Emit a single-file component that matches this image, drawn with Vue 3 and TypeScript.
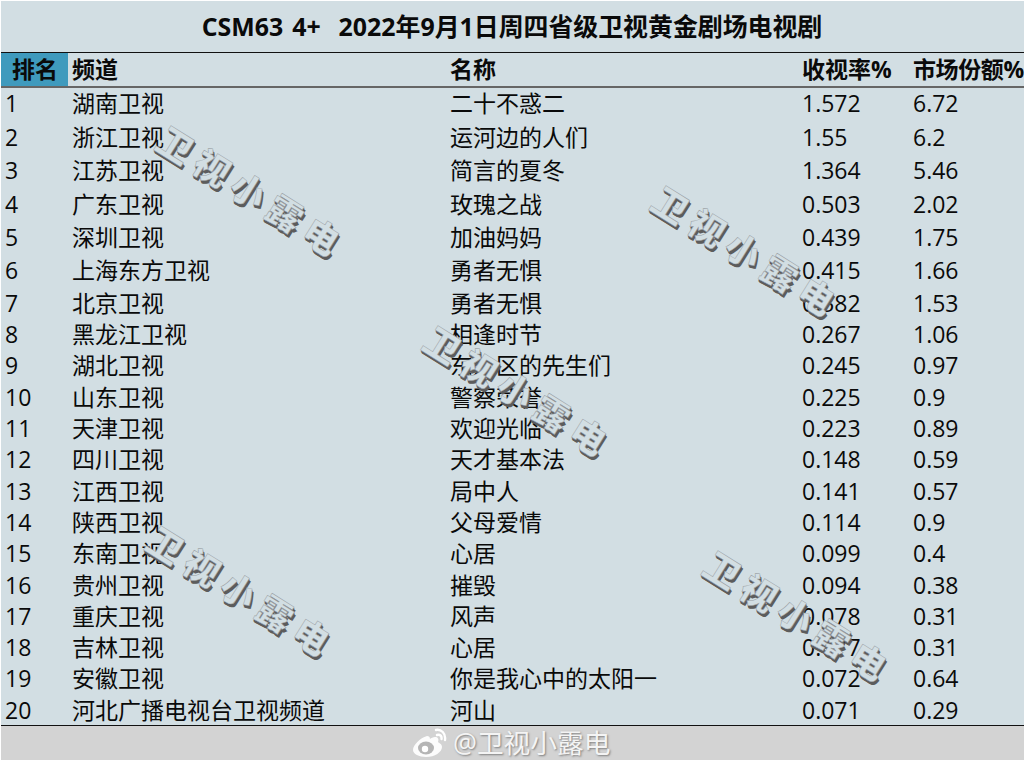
<script setup lang="ts">
interface Row { channel: string; name: string; rating: string; share: string }
const rows: Row[] = [
  { channel: '湖南卫视', name: '二十不惑二', rating: '1.572', share: '6.72' },
  { channel: '浙江卫视', name: '运河边的人们', rating: '1.55', share: '6.2' },
  { channel: '江苏卫视', name: '简言的夏冬', rating: '1.364', share: '5.46' },
  { channel: '广东卫视', name: '玫瑰之战', rating: '0.503', share: '2.02' },
  { channel: '深圳卫视', name: '加油妈妈', rating: '0.439', share: '1.75' },
  { channel: '上海东方卫视', name: '勇者无惧', rating: '0.415', share: '1.66' },
  { channel: '北京卫视', name: '勇者无惧', rating: '0.382', share: '1.53' },
  { channel: '黑龙江卫视', name: '相逢时节', rating: '0.267', share: '1.06' },
  { channel: '湖北卫视', name: '东八区的先生们', rating: '0.245', share: '0.97' },
  { channel: '山东卫视', name: '警察荣誉', rating: '0.225', share: '0.9' },
  { channel: '天津卫视', name: '欢迎光临', rating: '0.223', share: '0.89' },
  { channel: '四川卫视', name: '天才基本法', rating: '0.148', share: '0.59' },
  { channel: '江西卫视', name: '局中人', rating: '0.141', share: '0.57' },
  { channel: '陕西卫视', name: '父母爱情', rating: '0.114', share: '0.9' },
  { channel: '东南卫视', name: '心居', rating: '0.099', share: '0.4' },
  { channel: '贵州卫视', name: '摧毁', rating: '0.094', share: '0.38' },
  { channel: '重庆卫视', name: '风声', rating: '0.078', share: '0.31' },
  { channel: '吉林卫视', name: '心居', rating: '0.077', share: '0.31' },
  { channel: '安徽卫视', name: '你是我心中的太阳一', rating: '0.072', share: '0.64' },
  { channel: '河北广播电视台卫视频道', name: '河山', rating: '0.071', share: '0.29' },
]
const marks = [
  { left: 170, top: 118 },
  { left: 665, top: 178 },
  { left: 437, top: 318 },
  { left: 160, top: 518 },
  { left: 717, top: 543 },
]
</script>

<template>
  <div class="page">
    <h1 class="title">CSM63 4+&nbsp; 2022年9月1日周四省级卫视黄金剧场电视剧</h1>
    <div class="row head">
      <div class="cell rank-head">排名</div>
      <div class="cell">频道</div>
      <div class="cell">名称</div>
      <div class="cell">收视率%</div>
      <div class="cell last">市场份额%</div>
    </div>
    <div class="body">
      <div v-for="(r, i) in rows" :key="i" class="row" :class="i < 6 ? 'tall' : 'short'">
        <div class="cell">{{ i + 1 }}</div>
        <div class="cell">{{ r.channel }}</div>
        <div class="cell">{{ r.name }}</div>
        <div class="cell">{{ r.rating }}</div>
        <div class="cell">{{ r.share }}</div>
      </div>
    </div>
    <div class="foot">
      <svg class="weibo" width="36" height="30" viewBox="0 0 36 30">
        <path d="M15 8C8 10 1 17 1 22c0 4 6 7 13 7 9 0 16-5 16-10 0-3-3-4-4-5 1-3 0-5-3-5-2 0-4 1-5 2 0-2-1-3-3-3z" fill="#fff" opacity=".92" />
        <ellipse cx="14" cy="20" rx="8" ry="6.5" fill="#b5b5b5" />
        <circle cx="13" cy="21" r="3.2" fill="#fff" />
        <path d="M24 2c5-1 10 3 9 10M25 7c3-1 5 1 4.500 4" fill="none" stroke="#fff" stroke-width="2.400" stroke-linecap="round" />
      </svg>
      <span class="handle">@卫视小露电</span>
    </div>
    <div
      v-for="(m, i) in marks"
      :key="'m' + i"
      class="mark"
      :style="{ left: m.left + 'px', top: m.top + 'px' }"
    >卫视小露电</div>
  </div>
</template>

<style>
html, body { margin: 0; background: #fff; }
</style>

<style scoped>
.page {
  position: relative;
  width: 1023px;
  height: 759px;
  margin: 1px 0 0 1px;
  background: #d2dee3;
  color: #0a0a0a;
  overflow: hidden;
  font-family: "Open Sans", "Noto Sans CJK SC", sans-serif;
  font-size: 23px;
}
.title {
  margin: 0;
  height: 52px;
  box-sizing: border-box;
  border-bottom: 1px solid #111;
  text-align: center;
  font-size: 24.900px;
  font-weight: 700;
  word-spacing: 2.500px;
  line-height: 50px;
  padding-right: 1px;
  white-space: nowrap;
}
.row {
  display: grid;
  grid-template-columns: 67px 378px 352px 111px 115px;
  align-items: center;
  white-space: nowrap;
}
.cell { padding-left: 4px; padding-bottom: 1.500px; line-height: 30px; }
.head {
  height: 34.500px;
  box-sizing: border-box;
  border-bottom: 2px solid #666;
  font-weight: 700;
  align-items: stretch;
}
.head .cell { line-height: 33px; padding-bottom: 0; }
.head .last { letter-spacing: -0.4px; }
.head .rank-head {
  background: #3f9abd;
  padding-left: 11px;
}
.tall { height: 33.400px; }
.short { height: 31.300px; }
.foot {
  position: absolute;
  left: 0;
  right: 0;
  top: 724px;
  height: 34px;
  background: #d3d3d3;
  border-top: 1px solid #111;
  border-bottom: 1px solid #333;
  display: flex;
  align-items: center;
  gap: 5px;
  padding-left: 411px;
}
.weibo { flex: none; }
.handle {
  color: #f4f4f4;
  font-size: 26.700px;
  line-height: 34px;
  text-shadow: 1px 1px 2px rgba(70, 70, 70, 0.6);
}
.mark {
  position: absolute;
  font-size: 35px;
  font-weight: 900;
  line-height: 40px;
  letter-spacing: 8px;
  color: #d2dee3;
  white-space: nowrap;
  transform: rotate(32deg);
  transform-origin: left top;
  -webkit-text-stroke: 0.5px #9a9fa3;
  text-shadow: 1px 1px 0 #5c5c5c, 2px 2px 0 #5c5c5c, 3px 2px 0 #5c5c5c;
}
</style>
